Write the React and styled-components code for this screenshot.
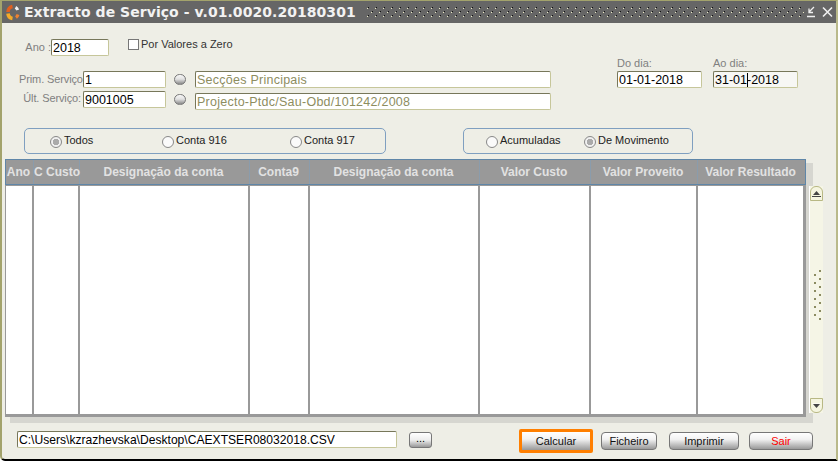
import React from 'react';
import styled, { createGlobalStyle } from 'styled-components';

const Global = createGlobalStyle`
	html, body {
		margin: 0;
		padding: 0;
		background: #fff;
	}
	* {
		box-sizing: border-box;
	}
`;

const Win = styled.div`
	width: 838px;
	height: 461px;
	display: flex;
	flex-direction: column;
	background: #eeeee6;
	border-top: 1px solid #a3a36c;
	border-left: 2px solid #a3a36c;
	border-right: 2px solid #b9b98a;
	border-bottom: 2px solid #000;
	border-bottom-left-radius: 5px;
	font-family: 'Liberation Sans', Arial, sans-serif;
	overflow: hidden;
`;

const TitleBar = styled.div`
	height: 22px;
	flex: none;
	display: flex;
	align-items: center;
	background: #666;
	padding: 0 0 0 3px;
`;

const Title = styled.div`
	margin-left: 3px;
	font-family: 'DejaVu Sans', Verdana, sans-serif;
	font-weight: bold;
	font-size: 14px;
	letter-spacing: 0.05px;
	color: #f2f2f2;
	white-space: nowrap;
`;

const Dots = styled.div`
	flex: 1;
	height: 12px;
	margin: 0 0 0 10px;
	background-image:
		radial-gradient(circle at 1.5px 2.5px, #ecebc8 0.9px, transparent 1px),
		radial-gradient(circle at 2.5px 1.5px, #111 0.6px, transparent 0.8px),
		radial-gradient(circle at 5.5px 6.5px, #ecebc8 0.9px, transparent 1px),
		radial-gradient(circle at 6.5px 5.5px, #111 0.6px, transparent 0.8px);
	background-size: 8px 8px;
`;

const Body = styled.div`
	flex: 1;
	display: flex;
	flex-direction: column;
	padding: 16px 0 0 3px;
`;

const TopArea = styled.div`
	display: flex;
	height: 71px;
	padding-left: 14px;
`;

const LeftForm = styled.div`
	width: 598px;
	display: flex;
	flex-direction: column;
`;

const AnoRow = styled.div`
	display: flex;
	height: 17px;
	padding-left: 5px;
	margin-bottom: 15px;
`;

const Label = styled.span`
	font-size: 11px;
	letter-spacing: ${({ $tight }) => ($tight ? '-0.12px' : '0')};
	color: #808080;
	white-space: nowrap;
	width: ${({ $w }) => $w}px;
	text-align: right;
	padding: ${({ $up }) => ($up ? 1 : 2)}px ${({ $tight }) => ($tight ? 2 : 0)}px 0 0;
`;

const Field = styled.div`
	width: ${({ $w }) => $w}px;
	height: 17px;
	flex: none;
	background: ${({ $bg }) => $bg || '#fff'};
	border: 1px solid #c6c69a;
	border-top-color: #77775a;
	border-left-color: #77775a;
	border-radius: 2px;
	font-size: ${({ $size }) => $size || 12.5}px;
	line-height: 16px;
	padding-left: 1px;
	color: ${({ $muted }) => ($muted ? '#8d8d5f' : '#000')};
	white-space: nowrap;
	position: relative;
	letter-spacing: ${({ $muted }) => ($muted ? '0.25px' : '0')};
`;

const Caret = styled.i`
	position: absolute;
	left: 33px;
	top: 1px;
	width: 1px;
	height: 14px;
	background: #000;
`;

const CheckRow = styled.label`
	display: flex;
	align-items: flex-start;
	height: 13px;
	margin-left: 19px;
	font-size: 11px;
	line-height: 11px;
	color: #333;
	white-space: nowrap;
`;

const CheckBox = styled.span`
	width: 11px;
	height: 11px;
	margin: 0 2px 0 0;
	background: #fff;
	border: 1px solid #777;
`;

const ServiceRow = styled.div`
	display: flex;
	height: 17px;
	margin-bottom: 3px;
`;

const LookupBtn = styled.span`
	width: 12px;
	height: 11px;
	flex: none;
	margin: 3px 9px 0 8px;
	border-radius: 6px;
	border: 1px solid #777;
	background: linear-gradient(#f6f6f6, #e2e2e2 45%, #888);
`;

const Description = styled(Field)`
	margin-top: ${({ $down }) => ($down ? 2 : 0)}px;
`;

const DateGroup = styled.div`
	margin-top: 16px;
	margin-right: 11px;
	display: flex;
	flex-direction: column;
`;

const DateLabel = styled.span`
	font-size: 11px;
	line-height: 16px;
	color: #808080;
`;

const OptionsArea = styled.div`
	display: flex;
	margin-top: 18px;
	padding-left: 19px;
	height: 26px;
`;

const OptionBox = styled.div`
	width: ${({ $w }) => $w}px;
	margin-right: 77px;
	border: 1px solid #7f9fc0;
	border-radius: 5px;
	display: flex;
	align-items: center;
	padding-left: ${({ $pad }) => $pad}px;
`;

const RadioItem = styled.span`
	width: ${({ $w }) => $w}px;
	display: flex;
	align-items: center;
	font-size: 11px;
	line-height: 13px;
	padding-bottom: 2px;
	color: #222;
	white-space: nowrap;
`;

const RadioMark = styled.span`
	width: 12px;
	height: 12px;
	margin: 3px 2px 0 0;
	flex: none;
	border-radius: 50%;
	border: 1px solid #888;
	background: ${({ $on }) =>
		$on ? 'radial-gradient(circle, #aaa 0 3px, #f0f0f0 3.5px)' : '#fafafa'};
`;

const TableRow = styled.div`
	display: flex;
	margin-top: 5px;
	height: 258px;
`;

const Table = styled.div`
	width: 801px;
	display: flex;
	flex-direction: column;
	box-shadow: 6px 5px 0 1px #d6d6d0;
`;

const HeadRow = styled.div`
	display: grid;
	grid-template-columns: ${({ $cols }) => $cols};
	height: 26px;
	flex: none;
	background: #999;
	border: 1px solid #5f86a8;
`;

const HeadCell = styled.div`
	border-right: 1px solid #8a9cac;
	padding-right: 2px;
	color: #e2e2e2;
	font-size: 12px;
	font-weight: bold;
	line-height: 24px;
	text-align: center;
	white-space: nowrap;
	&:last-child {
		border-right: 0;
	}
`;

const BodyRow = styled.div`
	flex: 1;
	display: grid;
	grid-template-columns: ${({ $cols }) => $cols};
	background: #fff;
	border: 3px solid #999;
	border-top-width: 1px;
	border-left-width: 1px;
	border-top-color: #999;
`;

const BodyCell = styled.div`
	border-right: 2px solid #999;
	&:last-child {
		border-right: 0;
	}
`;

const ScrollTrack = styled.div`
	width: 14px;
	height: 227px;
	margin: 27px 0 0 3px;
	position: relative;
	z-index: 1;
	background: #f5f5e6;
	border-left: 1px solid #fff;
	display: flex;
	flex-direction: column;
	align-items: center;
	justify-content: space-between;
`;

const ScrollBtn = styled.div`
	width: 13px;
	height: 15px;
	display: flex;
	align-items: center;
	justify-content: center;
	background: #f5f5e0;
	border: 1px solid #b8b884;
	border-radius: ${({ $down }) => ($down ? '0 0 6px 6px' : '6px 6px 0 0')};
`;

const GripSvg = styled.svg`
	margin: 0 0 9px 2px;
`;

const BottomArea = styled.div`
	display: flex;
	align-items: flex-start;
	margin-top: 14px;
	padding-left: 12px;
`;

const PathBtn = styled.div`
	width: 23px;
	height: 16px;
	margin: 1px 87px 0 12px;
	border: 1px solid #777;
	border-radius: 3px;
	background: linear-gradient(#fff, #eee 50%, #999);
	font-size: 11px;
	line-height: 11px;
	text-align: center;
`;

const ActionBtn = styled.div`
	width: ${({ $w }) => $w}px;
	height: 18px;
	margin: 1px 0 0 ${({ $gap }) => $gap}px;
	border: 1px solid #777;
	border-radius: 4px;
	background: linear-gradient(#fff, #f2f2f2 40%, #999);
	font-size: 11px;
	line-height: 17px;
	text-align: center;
	color: ${({ $danger }) => ($danger ? '#f00' : '#111')};
`;

const FocusFrame = styled(ActionBtn)`
	height: 24px;
	margin-top: -2px;
	border: 3px solid #ff7f00;
	border-radius: 2px;
	line-height: 18px;
`;

const Logo = () => (
	<svg width="16" height="17" viewBox="0 0 16 17">
		<path d="M3 8a5.5 5.5 0 0 1 4.5-5.4" fill="none" stroke="#e0601f" strokeWidth="3.6" />
		<path d="M10.5 3.4A5.5 5.5 0 0 1 12.8 6" fill="none" stroke="#f0f0f0" strokeWidth="3" />
		<path d="M3 9.5a5.5 5.5 0 0 0 4.5 5" fill="none" stroke="#f5ab28" strokeWidth="3.6" />
		<path d="M13 10.5a5.5 5.5 0 0 1-2 3" fill="none" stroke="#ee8230" strokeWidth="3" />
	</svg>
);

const WinControls = () => (
	<svg width="32" height="14" viewBox="0 0 32 14" fill="none" stroke="#f0f0f0">
		<path d="M3 11.5h8M10 2L5 7M5 3.5V7.5H9" strokeWidth="1.3" />
		<path d="M19 2.5l9 9M28 2.5l-9 9" strokeWidth="1.6" />
	</svg>
);

const Grip = () => (
	<GripSvg width="9" height="50" viewBox="0 0 9 50">
		{[0, 8, 16, 24, 32, 40, 48].map((y) => (
			<rect key={y} x="6" y={y} width="2" height="2" fill="#8b8b60" />
		))}
		{[4, 12, 20, 28, 36, 44].map((y) => (
			<rect key={y} x="1" y={y} width="2" height="2" fill="#8b8b60" />
		))}
	</GripSvg>
);

const Arrow = ({ down }) => (
	<svg width="9" height="6" viewBox="0 0 9 6">
		{down ? (
			<>
				<path d="M0 0h9" stroke="#fff" />
				<path d="M1 1h7L4.5 5z" fill="#444" />
			</>
		) : (
			<>
				<path d="M1 4h7L4.5 0z" fill="#444" />
				<path d="M0 5.5h9" stroke="#444" />
			</>
		)}
	</svg>
);

const columns = '28px 46px 170px 60px 170px 111px 107px 1fr';
const headers = [
	'Ano',
	'C Custo',
	'Designação da conta',
	'Conta9',
	'Designação da conta',
	'Valor Custo',
	'Valor Proveito',
	'Valor Resultado',
];

const App = () => {
	return (
		<Win>
			<Global />
			<TitleBar>
				<Logo />
				<Title>Extracto de Serviço - v.01.0020.20180301</Title>
				<Dots />
				<WinControls />
			</TitleBar>
			<Body>
				<TopArea>
					<LeftForm>
						<AnoRow>
							<Label $w={27}>Ano :</Label>
							<Field $w={58}>2018</Field>
							<CheckRow>
								<CheckBox />
								Por Valores a Zero
							</CheckRow>
						</AnoRow>
						<ServiceRow>
							<Label $w={64} $tight>
								Prim. Serviço
							</Label>
							<Field $w={83}>1</Field>
							<LookupBtn />
							<Description $w={356} $muted>
								Secções Principais
							</Description>
						</ServiceRow>
						<ServiceRow>
							<Label $w={64} $tight $up>
								Últ. Serviço:
							</Label>
							<Field $w={83}>9001005</Field>
							<LookupBtn />
							<Description $w={356} $muted $down>
								Projecto-Ptdc/Sau-Obd/101242/2008
							</Description>
						</ServiceRow>
					</LeftForm>
					<DateGroup>
						<DateLabel>Do dia:</DateLabel>
						<Field $w={85}>01-01-2018</Field>
					</DateGroup>
					<DateGroup>
						<DateLabel>Ao dia:</DateLabel>
						<Field $w={85} $bg="#f7f7f4">
							31-01-2018
							<Caret />
						</Field>
					</DateGroup>
				</TopArea>
				<OptionsArea>
					<OptionBox $w={362} $pad={25}>
						<RadioItem $w={112}>
							<RadioMark $on />
							Todos
						</RadioItem>
						<RadioItem $w={128}>
							<RadioMark />
							Conta 916
						</RadioItem>
						<RadioItem $w={80}>
							<RadioMark />
							Conta 917
						</RadioItem>
					</OptionBox>
					<OptionBox $w={230} $pad={22}>
						<RadioItem $w={98}>
							<RadioMark />
							Acumuladas
						</RadioItem>
						<RadioItem $w={90}>
							<RadioMark $on />
							De Movimento
						</RadioItem>
					</OptionBox>
				</OptionsArea>
				<TableRow>
					<Table>
						<HeadRow $cols={columns}>
							{headers.map((h, i) => (
								<HeadCell key={i}>{h}</HeadCell>
							))}
						</HeadRow>
						<BodyRow $cols={columns}>
							{headers.map((h, i) => (
								<BodyCell key={i} />
							))}
						</BodyRow>
					</Table>
					<ScrollTrack>
						<ScrollBtn>
							<Arrow />
						</ScrollBtn>
						<Grip />
						<ScrollBtn $down>
							<Arrow down />
						</ScrollBtn>
					</ScrollTrack>
				</TableRow>
				<BottomArea>
					<Field $w={380} $size={12.1}>
						C:\Users\kzrazhevska\Desktop\CAEXTSER08032018.CSV
					</Field>
					<PathBtn>...</PathBtn>
					<FocusFrame as="div" $w={74} $gap={0}>
						Calcular
					</FocusFrame>
					<ActionBtn $w={56} $gap={8}>
						Ficheiro
					</ActionBtn>
					<ActionBtn $w={70} $gap={12}>
						Imprimir
					</ActionBtn>
					<ActionBtn $w={64} $gap={10} $danger>
						Sair
					</ActionBtn>
				</BottomArea>
			</Body>
		</Win>
	);
};

export default App;
